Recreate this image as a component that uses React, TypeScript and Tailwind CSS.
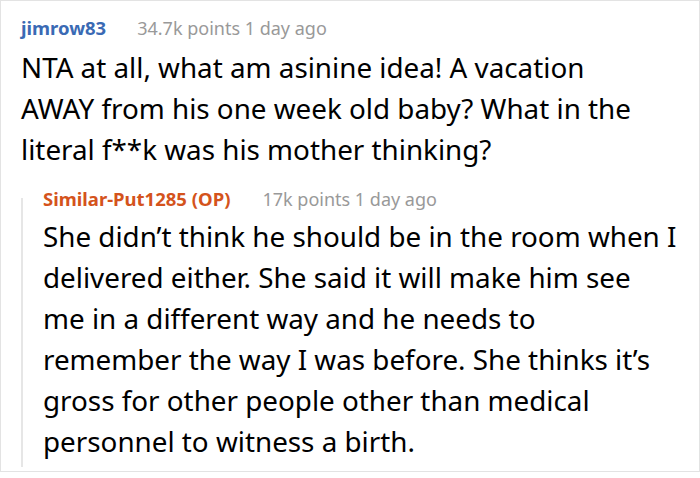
const topLines = [
  'NTA at all, what am asinine idea! A vacation',
  'AWAY from his one week old baby? What in the',
  'literal f**k was his mother thinking?',
]

const replyLines = [
  'She didn’t think he should be in the room when I',
  'delivered either. She said it will make him see',
  'me in a different way and he needs to',
  'remember the way I was before. She thinks it’s',
  'gross for other people other than medical',
  'personnel to witness a birth.',
]

export default function App() {
  return (
    <div className="w-[700px] h-[478px] bg-white" style={{ fontFamily: '"Noto Sans", "Open Sans", sans-serif' }}>
      <div className="h-[472px] border border-[#e3e3e3] pl-5 pr-4 pt-[12px]">
        {/* top comment */}
        <div className="flex items-baseline gap-[31px] leading-[30px]">
          <span className="text-[18.5px] font-bold text-[#3a6ab4]">jimrow83</span>
          <span className="text-[18px] text-[#999999]">34.7k points 1 day ago</span>
        </div>
        <p className="text-[27.8px] leading-[41px] text-black mt-[4px] whitespace-nowrap">
          {topLines.map(l => (
            <span key={l} className="block">{l}</span>
          ))}
        </p>

        {/* reply */}
        <div className="mt-[14px] flex">
          <div className="w-[2px] bg-[#e6e6e6] mt-[14px] mb-[-5px]" />
          <div className="pl-[20px]">
            <div className="flex items-baseline gap-[32px] leading-[30px]">
              <span className="text-[18.5px] font-bold text-[#d4531c]">Similar-Put1285 (OP)</span>
              <span className="text-[18px] text-[#999999]">17k points 1 day ago</span>
            </div>
            <p className="text-[27.8px] leading-[41px] text-black mt-[2px] whitespace-nowrap">
              {replyLines.map(l => (
                <span key={l} className="block">{l}</span>
              ))}
            </p>
          </div>
        </div>
      </div>
    </div>
  )
}
